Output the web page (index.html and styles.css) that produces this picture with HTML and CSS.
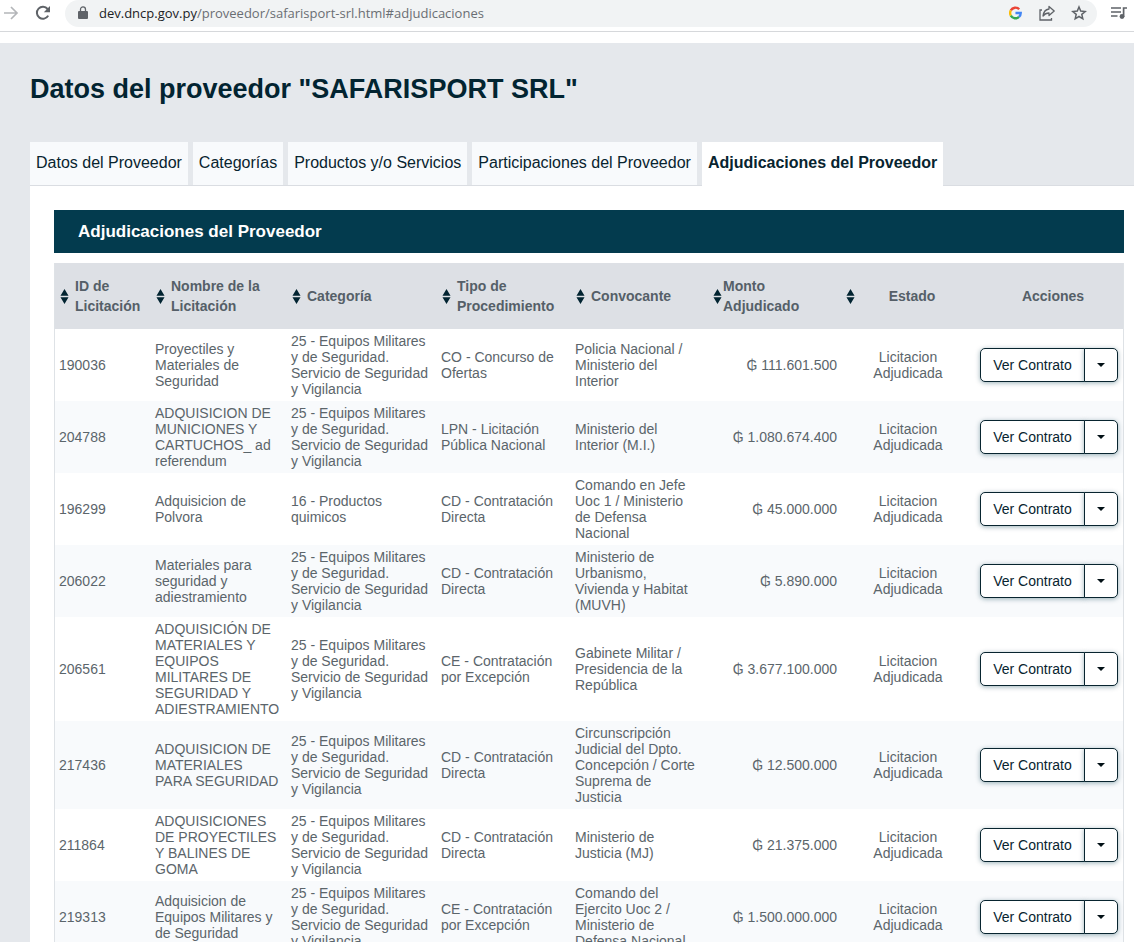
FILE: index.html
```html
<!DOCTYPE html>
<html lang="es">
<head>
<meta charset="utf-8">
<title>Datos del proveedor "SAFARISPORT SRL"</title>
<link rel="stylesheet" href="styles.css">
</head>
<body>
<svg class="defs" aria-hidden="true">
  <symbol id="sort" viewBox="0 0 9 16"><path fill="currentColor" d="M4.5 0 8.8 7.2H.2zM4.5 16 .2 8.8h8.6z"/></symbol>
</svg>
<header class="toolbar">
  <button class="tool muted" type="button" aria-label="Adelante"><svg width="16" height="16" viewBox="0 0 16 16" fill="none" stroke="currentColor" stroke-width="1.7"><path d="M1 8h13M8 2l6 6-6 6"/></svg></button>
  <button class="tool reload" type="button" aria-label="Recargar"><svg width="16" height="16" viewBox="0 0 16 16"><path d="M13.2 10.6A6 6 0 1 1 12.6 4" fill="none" stroke="currentColor" stroke-width="2"/><path d="M15 1v6.2H8.8z" fill="currentColor"/></svg></button>
  <div class="address">
    <svg class="lock" width="10" height="14" viewBox="0 0 10 14"><path fill="currentColor" d="M1 5h8a1 1 0 0 1 1 1v6a1 1 0 0 1-1 1H1a1 1 0 0 1-1-1V6a1 1 0 0 1 1-1z"/><path d="M2.5 5.5V3.4a2.5 2.5 0 0 1 5 0v2.1" fill="none" stroke="currentColor" stroke-width="1.3"/></svg>
    <span class="url"><span class="host">dev.dncp.gov.py</span>/proveedor/safarisport-srl.html#adjudicaciones</span>
    <button class="tool" type="button" aria-label="Google"><svg width="14" height="14" viewBox="0 0 13 12" fill="none" stroke-width="2.2"><path stroke="#ea4335" d="M1.7 3.6A4.9 4.9 0 0 1 9.5 2.5"/><path stroke="#fbbc05" d="M1.7 8.4a4.9 4.9 0 0 1 0-4.8"/><path stroke="#34a853" d="M9.3 9.6a4.9 4.9 0 0 1-7.6-1.2"/><path stroke="#4285f4" d="M6 6h4.9a4.9 4.9 0 0 1-1.6 3.6"/></svg></button>
    <button class="tool" type="button" aria-label="Compartir"><svg width="16" height="16" viewBox="0 0 16 16" fill="none" stroke="currentColor" stroke-width="1.3"><path d="M3 5H1v10h11.500v-2"/><path stroke-linejoin="round" d="M10 1.500 15.200 6 10 10.500V8C7.200 8 5.500 9 4 11c.4-3.500 2.300-6.400 6-7z"/></svg></button>
    <button class="tool" type="button" aria-label="Favorito"><svg width="16" height="16" viewBox="0 0 16 16" fill="none" stroke="currentColor" stroke-width="1.5"><path d="m8 2 1.700 4.100 4.500.4-3.400 2.900 1 4.400L8 11.500l-3.800 2.300 1-4.400L1.800 6.500l4.500-.4z"/></svg></button>
  </div>
  <button class="tool" type="button" aria-label="Lista multimedia"><svg width="16" height="14" viewBox="0 0 16 14"><path d="M0 2h10M0 6h10M0 10h6.500" stroke="currentColor" stroke-width="1.7"/><circle cx="11" cy="10.500" r="2.400" fill="currentColor"/><path d="M12.600 11V2H16" fill="none" stroke="currentColor" stroke-width="1.700"/></svg></button>
</header>
<main class="page">
  <h1>Datos del proveedor "SAFARISPORT SRL"</h1>
  <nav class="tabs">
    <a href="#datos">Datos del Proveedor</a>
    <a href="#categorias">Categorías</a>
    <a href="#productos">Productos y/o Servicios</a>
    <a href="#participaciones">Participaciones del Proveedor</a>
    <a class="active" href="#adjudicaciones">Adjudicaciones del Proveedor</a>
  </nav>
  <section class="panel" id="adjudicaciones">
    <h2>Adjudicaciones del Proveedor</h2>
    <table>
      <colgroup><col class="c-id"><col class="c-nombre"><col class="c-cat"><col class="c-tipo"><col class="c-conv"><col class="c-monto"><col class="c-estado"><col class="c-acc"></colgroup>
      <thead>
        <tr>
          <th><button type="button"><svg><use href="#sort"/></svg><span>ID de Licitación</span></button></th>
          <th><button type="button"><svg><use href="#sort"/></svg><span>Nombre de la Licitación</span></button></th>
          <th><button type="button"><svg><use href="#sort"/></svg><span>Categoría</span></button></th>
          <th><button type="button"><svg><use href="#sort"/></svg><span>Tipo de Procedimiento</span></button></th>
          <th><button type="button"><svg><use href="#sort"/></svg><span>Convocante</span></button></th>
          <th><button class="tight" type="button"><svg><use href="#sort"/></svg><span>Monto Adjudicado</span></button></th>
          <th><button class="centered" type="button"><svg><use href="#sort"/></svg><span>Estado</span></button></th>
          <th class="plain">Acciones</th>
        </tr>
      </thead>
      <tbody>
        <tr><td>190036</td><td>Proyectiles y Materiales de Seguridad</td><td>25 - Equipos Militares y de Seguridad. Servicio de Seguridad y Vigilancia</td><td>CO - Concurso de Ofertas</td><td>Policia Nacional / Ministerio del Interior</td><td class="monto">₲ 111.601.500</td><td class="estado">Licitacion Adjudicada</td><td class="acc"><div class="group"><button type="button">Ver Contrato</button><button type="button" aria-label="Más acciones"><i class="caret"></i></button></div></td></tr>
        <tr><td>204788</td><td>ADQUISICION DE MUNICIONES Y CARTUCHOS_ ad referendum</td><td>25 - Equipos Militares y de Seguridad. Servicio de Seguridad y Vigilancia</td><td>LPN - Licitación Pública Nacional</td><td>Ministerio del Interior (M.I.)</td><td class="monto">₲ 1.080.674.400</td><td class="estado">Licitacion Adjudicada</td><td class="acc"><div class="group"><button type="button">Ver Contrato</button><button type="button" aria-label="Más acciones"><i class="caret"></i></button></div></td></tr>
        <tr><td>196299</td><td>Adquisicion de Polvora</td><td>16 - Productos quimicos</td><td>CD - Contratación Directa</td><td>Comando en Jefe Uoc 1 / Ministerio de Defensa Nacional</td><td class="monto">₲ 45.000.000</td><td class="estado">Licitacion Adjudicada</td><td class="acc"><div class="group"><button type="button">Ver Contrato</button><button type="button" aria-label="Más acciones"><i class="caret"></i></button></div></td></tr>
        <tr><td>206022</td><td>Materiales para seguridad y adiestramiento</td><td>25 - Equipos Militares y de Seguridad. Servicio de Seguridad y Vigilancia</td><td>CD - Contratación Directa</td><td>Ministerio de Urbanismo, Vivienda y Habitat (MUVH)</td><td class="monto">₲ 5.890.000</td><td class="estado">Licitacion Adjudicada</td><td class="acc"><div class="group"><button type="button">Ver Contrato</button><button type="button" aria-label="Más acciones"><i class="caret"></i></button></div></td></tr>
        <tr><td>206561</td><td>ADQUISICIÓN DE MATERIALES Y EQUIPOS MILITARES DE SEGURIDAD Y ADIESTRAMIENTO</td><td>25 - Equipos Militares y de Seguridad. Servicio de Seguridad y Vigilancia</td><td>CE - Contratación por Excepción</td><td>Gabinete Militar / Presidencia de la República</td><td class="monto">₲ 3.677.100.000</td><td class="estado">Licitacion Adjudicada</td><td class="acc"><div class="group"><button type="button">Ver Contrato</button><button type="button" aria-label="Más acciones"><i class="caret"></i></button></div></td></tr>
        <tr><td>217436</td><td>ADQUISICION DE MATERIALES PARA SEGURIDAD</td><td>25 - Equipos Militares y de Seguridad. Servicio de Seguridad y Vigilancia</td><td>CD - Contratación Directa</td><td>Circunscripción Judicial del Dpto. Concepción / Corte Suprema de Justicia</td><td class="monto">₲ 12.500.000</td><td class="estado">Licitacion Adjudicada</td><td class="acc"><div class="group"><button type="button">Ver Contrato</button><button type="button" aria-label="Más acciones"><i class="caret"></i></button></div></td></tr>
        <tr><td>211864</td><td>ADQUISICIONES DE PROYECTILES Y BALINES DE GOMA</td><td>25 - Equipos Militares y de Seguridad. Servicio de Seguridad y Vigilancia</td><td>CD - Contratación Directa</td><td>Ministerio de Justicia (MJ)</td><td class="monto">₲ 21.375.000</td><td class="estado">Licitacion Adjudicada</td><td class="acc"><div class="group"><button type="button">Ver Contrato</button><button type="button" aria-label="Más acciones"><i class="caret"></i></button></div></td></tr>
        <tr><td>219313</td><td>Adquisicion de Equipos Militares y de Seguridad</td><td>25 - Equipos Militares y de Seguridad. Servicio de Seguridad y Vigilancia</td><td>CE - Contratación por Excepción</td><td>Comando del Ejercito Uoc 2 / Ministerio de Defensa Nacional</td><td class="monto">₲ 1.500.000.000</td><td class="estado">Licitacion Adjudicada</td><td class="acc"><div class="group"><button type="button">Ver Contrato</button><button type="button" aria-label="Más acciones"><i class="caret"></i></button></div></td></tr>
      </tbody>
    </table>
  </section>
</main>
</body>
</html>
```
FILE: styles.css
```css
* { box-sizing: border-box; }
body {
  margin: 0;
  height: 100vh;
  overflow: hidden;
  display: flex;
  flex-direction: column;
  background: #fff;
  color: #5b656b;
  font: 14px/16px "Liberation Sans", Arial, sans-serif;
}
button { font: inherit; color: inherit; cursor: pointer; }
.defs { position: absolute; width: 0; height: 0; }

/* Browser toolbar */
.toolbar {
  flex: none;
  display: flex;
  align-items: center;
  height: 32px;
  padding: 0 7px 5px 3px;
  border-bottom: 1px solid #d6d8db;
  color: #5f6368;
}
.tool { display: flex; padding: 0; border: 0; background: none; }
.muted { color: #b4b6b9; }
.reload { margin-left: 16px; }
.address {
  flex: 1;
  display: flex;
  align-items: center;
  gap: 16px;
  height: 27px;
  margin: 0 14px;
  padding: 0 10px 0 13px;
  border-radius: 14px;
  background: #f1f3f4;
}
.url {
  flex: 1;
  margin-left: -5px;
  color: #6a6e73;
  font: 13px/20px "Open Sans", sans-serif;
}
.host { color: #202124; }

/* Page */
.page {
  flex: 1;
  min-height: 0;
  overflow: hidden;
  margin-top: 11px;
  padding-left: 30px;
  background: #e5e8ec;
}
h1 {
  margin: 0;
  padding: 30px 0 36px;
  color: #022431;
  font-size: 27px;
  line-height: 33px;
}
.tabs {
  display: flex;
  gap: 5px;
  border-bottom: 1px solid #dadde2;
}
.tabs a {
  padding: 11px 6px 12px;
  background: #f8fafc;
  color: #08242f;
  font-size: 16px;
  line-height: 20px;
  text-decoration: none;
  white-space: nowrap;
}
.tabs .active { margin-bottom: -1px; background: #fff; font-weight: bold; }
.panel { padding: 24px 10px 24px 24px; background: #fff; }
h2 {
  margin: 0 0 10px;
  padding: 12px 24px 11px;
  background: #033b4e;
  color: #fff;
  font-size: 17px;
  line-height: 20px;
}

/* Table */
table {
  width: 100%;
  table-layout: fixed;
  border: solid #dee2e6;
  border-width: 0 1px;
  border-spacing: 0;
}
.c-id { width: 96px; }
.c-nombre { width: 136px; }
.c-cat { width: 150px; }
.c-tipo { width: 134px; }
.c-conv { width: 137px; }
.c-monto { width: 133px; }
.c-estado { width: 134px; }
.c-acc { width: 148px; }
th {
  padding: 13px 12px 13px 5px;
  background: #dde0e5;
  color: #555f68;
  font-weight: bold;
  line-height: 20px;
  text-align: left;
}
th.plain { padding-left: 20px; text-align: center; }
th button {
  display: flex;
  align-items: center;
  gap: 6px;
  width: 100%;
  padding: 0;
  border: 0;
  background: none;
  text-align: left;
}
th svg { flex: none; width: 9px; height: 15px; color: #022431; }
th .tight { gap: 1px; }
th .centered span { flex: 1; text-align: center; }
td { padding: 4px; vertical-align: middle; }
td:nth-child(2) { padding-right: 7px; }
td:nth-child(5) { padding-right: 8px; }
tbody tr:nth-child(even) { background: #f8fafc; }
.monto { text-align: right; }
.estado { text-align: center; }
.group {
  display: flex;
  width: max-content;
  margin: 0 auto;
}
.group button {
  display: flex;
  align-items: center;
  height: 34px;
  padding: 0 12px;
  border: 1px solid #08242f;
  border-radius: 5px 0 0 5px;
  background: #fff;
  color: #08242f;
  box-shadow: 0 1px 5px rgba(3, 59, 78, .4);
}
.group button + button { margin-left: -1px; border-radius: 0 5px 5px 0; }
.caret {
  border: solid transparent;
  border-width: 4px 4px 0;
  border-top-color: #021016;
}
```
